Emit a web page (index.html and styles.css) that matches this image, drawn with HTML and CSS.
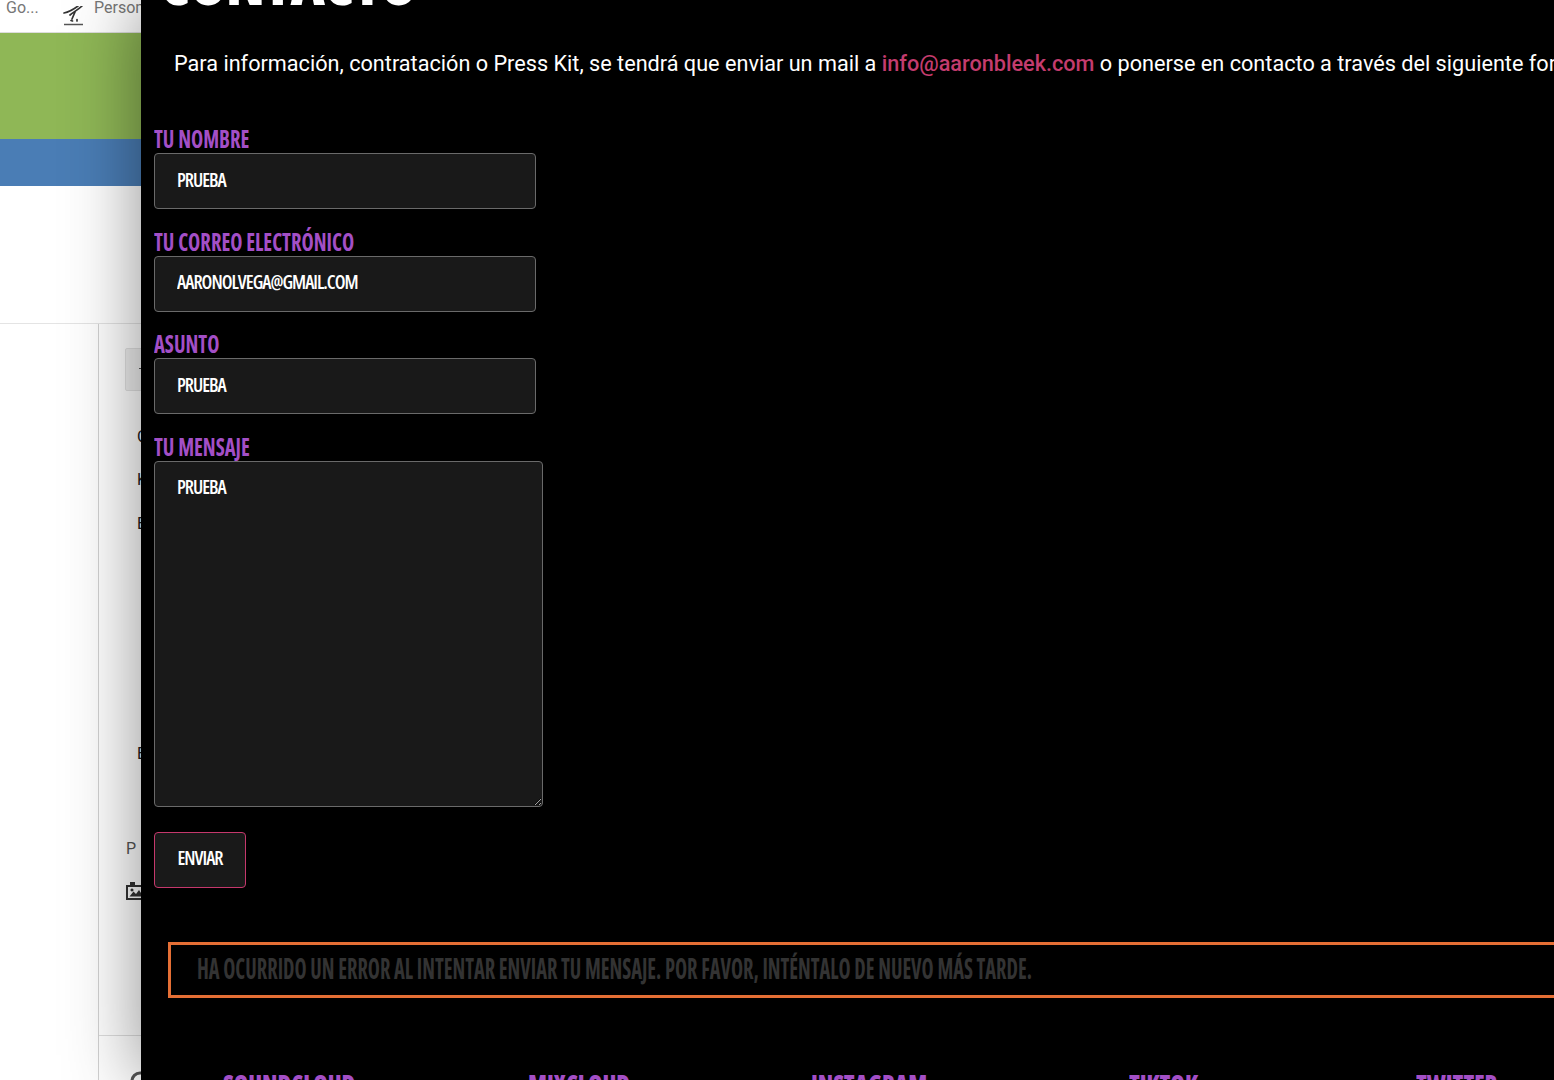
FILE: index.html
```html
<!DOCTYPE html>
<html lang="es">
<head>
<meta charset="utf-8">
<title>Contacto</title>
<link rel="stylesheet" href="styles.css">
</head>
<body>
<div class="page">
  <div class="behind">
    <div class="topbar">
      <span class="tab-go">Go...</span>
      <svg class="sig" width="22" height="20" viewBox="0 0 22 20"><path d="M2 7C7 6 12 3 16 0M20 0C17 3 13 5 8 9M13 6L10 13M9 14.500l1.500 .5M15 13.500v1.500" fill="none" stroke="#333" stroke-width="1.700" stroke-linecap="round"/><path d="M2 18.500h19" stroke="#555" stroke-width="1.500"/></svg>
      <span class="tab-person">Personal</span>
    </div>
    <div class="band-green"></div>
    <div class="band-blue"></div>
    <div class="blank"></div>
    <div class="editor">
      <div class="rail"></div>
      <div class="editor-main">
        <div class="toolbox"><span class="tool-mark"></span></div>
        <div class="letter letter-c">C</div>
        <div class="letter letter-k">K</div>
        <div class="letter letter-p">E</div>
        <div class="letter letter-e">E</div>
        <div class="letter-small">P</div>
        <svg class="pic" width="24" height="20" viewBox="0 0 24 20"><path fill="#333" fill-rule="evenodd" d="M0 4h4V1h5v3h11v15H0zM2 6v11h16V6zM3.500 15.500l4-5 2.500 2.500 3-4 4.500 6.500zM6 7.500a1.500 1.500 0 1 1-.01 0z"/></svg>
        <div class="editor-foot"><svg class="globe" width="20" height="20" viewBox="0 0 20 20"><circle cx="10" cy="10" r="8" fill="none" stroke="#555" stroke-width="3"/></svg></div>
      </div>
    </div>
  </div>
  <main class="modal">
    <div class="modal-inner">
      <h1 class="title">CONTACTO</h1>
      <p class="intro">Para información, contratación o Press Kit, se tendrá que enviar un mail a <a class="mail" href="#">info@aaronbleek.com</a> o ponerse en contacto a través del siguiente formulario:</p>
      <form class="form">
        <label class="field"><span class="label">Tu nombre</span><input class="input" type="text" value="PRUEBA"></label>
        <label class="field"><span class="label">Tu correo electrónico</span><input class="input" type="text" value="AARONOLVEGA@GMAIL.COM"></label>
        <label class="field"><span class="label">Asunto</span><input class="input" type="text" value="PRUEBA"></label>
        <label class="field"><span class="label">Tu mensaje</span><textarea class="input textarea">PRUEBA</textarea></label>
        <button class="send" type="button">ENVIAR</button>
      </form>
      <div class="error"><span class="error-text">Ha ocurrido un error al intentar enviar tu mensaje. Por favor, inténtalo de nuevo más tarde.</span></div>
      <div class="social">
        <span class="social-item">SoundCloud</span>
        <span class="social-item">Mixcloud</span>
        <span class="social-item">Instagram</span>
        <span class="social-item">TikTok</span>
        <span class="social-item">Twitter</span>
      </div>
    </div>
  </main>
</div>
</body>
</html>
```
FILE: styles.css
```css
* { box-sizing: border-box; }
html, body { margin: 0; height: 100%; overflow: hidden; background: #fff; }
.page { display: flex; width: 1554px; height: 1080px; overflow: hidden; }

/* page behind the side panel */
.behind { flex: 0 0 141px; height: 1080px; overflow: hidden; background: #fff; font-family: Roboto, sans-serif; }
.topbar { display: flex; align-items: center; height: 33px; padding: 0 0 17px 6px; border-bottom: 1px solid #ddd; white-space: nowrap; color: #777; font-size: 16px; }
.tab-go { width: 56px; flex: none; }
.sig { flex: none; margin: 16px 0 0; }
.tab-person { margin-left: 10px; }
.band-green { height: 106px; background: #8fb756; }
.band-blue { height: 47px; background: #4a7db5; }
.blank { height: 138px; border-bottom: 1px solid #e4e4e4; }
.editor { display: flex; height: 756px; }
.rail { flex: 0 0 99px; border-right: 1px solid #d2d2d2; }
.editor-main { flex: 0 0 60px; display: flex; flex-direction: column; align-items: flex-start; }
.toolbox { width: 60px; height: 43px; margin: 24px 0 0 26px; background: #f0f0f0; border: 1px solid #e2e2e2; border-radius: 2px; position: relative; }
.tool-mark { position: absolute; left: 13px; top: 19px; width: 5px; height: 1px; background: #555; }
.letter { margin-left: 38px; height: 22px; line-height: 22px; font-size: 16px; color: #222; }
.letter-c { margin-top: 35px; }
.letter-k { margin-top: 21px; }
.letter-p { margin-top: 22px; }
.letter-e { margin-top: 208px; }
.letter-small { margin: 74px 0 0 27px; height: 20px; line-height: 20px; font-size: 16px; color: #555; }
.pic { flex: none; margin: 22px 0 0 27px; }
.editor-foot { align-self: stretch; width: 60px; height: 44px; margin-top: 134px; border-top: 1px solid #ddd; padding: 35px 0 0 31px; }
.globe { display: block; }

/* side panel */
.modal { flex: 1 1 auto; position: relative; z-index: 1; height: 1080px; overflow: hidden; background: #000; box-shadow: 0 0 70px 0 rgba(0, 0, 0, 0.45); color: #fff; }
.modal-inner { margin-top: -51px; }
.title { margin: 0 0 0 19px; height: 66px; font: 800 60px/66px "Open Sans", sans-serif; font-stretch: 75%; letter-spacing: -1px; color: #fff; white-space: nowrap; }
.intro { margin: 34px 0 0 33px; font: 400 21.66px/30px Roboto, sans-serif; color: #fff; white-space: nowrap; }
.mail { color: #c43c6e; text-decoration: none; font-weight: 500; }

.form { display: flex; flex-direction: column; align-items: flex-start; margin: 44px 0 0 13px; }
.field { display: flex; flex-direction: column; align-items: flex-start; margin-bottom: 16.5px; }
.label { display: inline-block; height: 30px; font: 700 25px/30px "Open Sans", sans-serif; font-stretch: 75%; text-transform: uppercase; color: #a34fc6; white-space: nowrap; transform: scaleX(0.825); transform-origin: left center; }
.input { display: block; width: 382px; height: 56px; margin: 0; padding: 0 22px 3px; background: #191919; border: 1px solid #6a6a6a; border-radius: 4px; outline: 0; color: #fff; font: 600 19px "Open Sans", sans-serif; font-stretch: 75%; letter-spacing: -1px; }
.textarea { width: 389px; height: 346px; padding: 12px 22px; resize: both; }
.send { width: 92px; height: 56px; margin: 9px 0 0; padding: 0 0 5px; background: #191919; border: 1px solid #c5386c; border-radius: 4px; color: #fff; font: 600 19px "Open Sans", sans-serif; font-stretch: 75%; letter-spacing: -1px; }

.error { width: 1500px; height: 56px; margin: 54px 0 0 27px; padding: 0 0 0 26px; border: 3px solid #e56f35; white-space: nowrap; }
.error-text { display: inline-block; font: 700 29px/46px "Open Sans", sans-serif; font-stretch: 75%; text-transform: uppercase; color: #333; transform: scaleX(0.705); transform-origin: left center; }

.social { display: grid; grid-template-columns: 305px 283px 318px 287px 100px; margin: 71px 0 0 82px; height: 30px; }
.social-item { display: inline-block; font: 800 27px/30px "Open Sans", sans-serif; font-stretch: 75%; text-transform: uppercase; color: #a34fc6; white-space: nowrap; transform: scaleX(0.87); transform-origin: left center; }
```
